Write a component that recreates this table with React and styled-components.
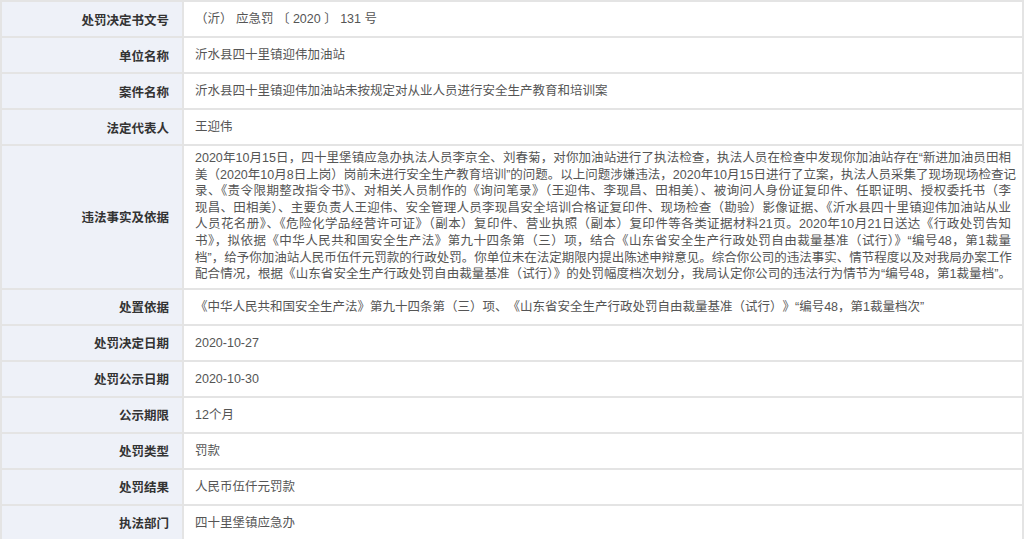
import React from "react";
import styled, { createGlobalStyle } from "styled-components";

const GlobalStyle = createGlobalStyle`
  html, body {
    margin: 0;
    padding: 0;
    background: #ffffff;
  }
  body {
    font-family: "Liberation Sans", "Noto Sans CJK SC", sans-serif;
  }
`;

const Table = styled.table`
  width: 1024px;
  border-collapse: collapse;
  table-layout: fixed;
  font-size: 12.5px;
`;

const Row = styled.tr``;

const Label = styled.th`
  width: 156px;
  height: 34px;
  padding: 0 13px 0 11px;
  background: #eef1f8;
  border: 2px solid #e4e4e4;
  color: #333333;
  font-weight: bold;
  font-size: 12.5px;
  text-align: right;
  vertical-align: middle;
`;

const Value = styled.td`
  height: 34px;
  padding: ${(props) => (props.$long ? "4px 11px 5px 11px" : "0 11px")};
  border: 2px solid #e4e4e4;
  color: #555555;
  font-size: 12.5px;
  line-height: ${(props) => (props.$long ? "16.6px" : "18px")};
  vertical-align: middle;
  text-align: left;
  text-spacing-trim: ${(props) => (props.$long ? "normal" : "space-all")};
`;

// each line of the long paragraph, broken as on the source page
const Line = styled.span`
  display: block;
  text-align: justify;
  text-align-last: justify;
  white-space: nowrap;
`;

const factLines = [
  "2020年10月15日，四十里堡镇应急办执法人员李京全、刘春菊，对你加油站进行了执法检查，执法人员在检查中发现你加油站存在“新进加油员田相",
  "美（2020年10月8日上岗）岗前未进行安全生产教育培训”的问题。以上问题涉嫌违法，2020年10月15日进行了立案，执法人员采集了现场现场检查记",
  "录、《责令限期整改指令书》、对相关人员制作的《询问笔录》（王迎伟、李现昌、田相美）、被询问人身份证复印件、任职证明、授权委托书（李",
  "现昌、田相美）、主要负责人王迎伟、安全管理人员李现昌安全培训合格证复印件、现场检查（勘验）影像证据、《沂水县四十里镇迎伟加油站从业",
  "人员花名册》、《危险化学品经营许可证》（副本）复印件、营业执照（副本）复印件等各类证据材料21页。2020年10月21日送达《行政处罚告知",
  "书》，拟依据《中华人民共和国安全生产法》第九十四条第（三）项，结合《山东省安全生产行政处罚自由裁量基准（试行）》“编号48，第1裁量",
  "档”，给予你加油站人民币伍仟元罚款的行政处罚。你单位未在法定期限内提出陈述申辩意见。综合你公司的违法事实、情节程度以及对我局办案工作",
  "配合情况，根据《山东省安全生产行政处罚自由裁量基准（试行）》的处罚幅度档次划分，我局认定你公司的违法行为情节为“编号48，第1裁量档”。",
];

const facts = factLines.map((line) => <Line key={line}>{line}</Line>);

const rows = [
  ["处罚决定书文号", "（沂） 应急罚 〔 2020 〕 131 号"],
  ["单位名称", "沂水县四十里镇迎伟加油站"],
  ["案件名称", "沂水县四十里镇迎伟加油站未按规定对从业人员进行安全生产教育和培训案"],
  ["法定代表人", "王迎伟"],
  ["违法事实及依据", facts, true],
  [
    "处置依据",
    "《中华人民共和国安全生产法》第九十四条第（三）项、《山东省安全生产行政处罚自由裁量基准（试行）》“编号48，第1裁量档次”",
  ],
  ["处罚决定日期", "2020-10-27"],
  ["处罚公示日期", "2020-10-30"],
  ["公示期限", "12个月"],
  ["处罚类型", "罚款"],
  ["处罚结果", "人民币伍仟元罚款"],
  ["执法部门", "四十里堡镇应急办"],
];

const App = () => {
  return (
    <>
      <GlobalStyle />
      <Table>
        <tbody>
          {rows.map(([label, value, long]) => (
            <Row key={label}>
              <Label>{label}</Label>
              <Value $long={long}>{value}</Value>
            </Row>
          ))}
        </tbody>
      </Table>
    </>
  );
};

export default App;
